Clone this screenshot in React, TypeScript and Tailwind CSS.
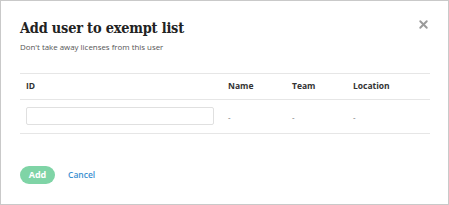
import { X } from "lucide-react";

const cols = [
  { label: "ID", w: "w-[202px]" },
  { label: "Name", w: "w-[64px]" },
  { label: "Team", w: "w-[61px]" },
  { label: "Location", w: "" },
];

export default function App() {
  return (
    <div className="w-[449px] h-[205px] border border-[#c9c9c9] bg-white relative font-['Open_Sans',sans-serif] text-[#333]">
      <button className="absolute right-[18px] top-[17px] text-[#9a9a9a]">
        <X size={13} strokeWidth={3.5} />
      </button>

      <div className="pl-[19px] pr-[19px] pt-[16px]">
        <h1 className="font-['DejaVu_Serif_Condensed','Liberation_Serif',serif] font-bold text-[14.4px] leading-[22px] text-[#222] tracking-[-0.2px]">
          Add user to exempt list
        </h1>
        <p className="text-[7.9px] leading-[12px] text-[#555] mt-[2px]">Don't take away licenses from this user</p>

        <table className="w-[410px] mt-[20px] border-collapse">
          <thead>
            <tr className="border-t border-b border-[#e6e6e6] h-[26px]">
              {cols.map((c) => (
                <th key={c.label} className={`${c.w} text-left font-bold text-[8.5px] pl-[6px] text-[#333]`}>
                  {c.label}
                </th>
              ))}
            </tr>
          </thead>
          <tbody>
            <tr className="border-b border-[#e6e6e6] h-[34px]">
              <td className="pl-[6px] pb-[1px]">
                <input className="w-[188px] h-[18px] border border-[#e0e0e0] rounded-[2px] outline-none block" />
              </td>
              <td className="pl-[6px] text-[8px] text-[#666]">-</td>
              <td className="pl-[6px] text-[8px] text-[#666]">-</td>
              <td className="pl-[6px] text-[8px] text-[#666]">-</td>
            </tr>
          </tbody>
        </table>

        <div className="flex items-center mt-[32px] gap-[13px]">
          <button className="w-[35px] h-[18px] rounded-full bg-[#7fd4a6] text-white text-[9px] font-bold">Add</button>
          <button className="text-[#3b8fd1] text-[8.5px] font-semibold">Cancel</button>
        </div>
      </div>
    </div>
  );
}
